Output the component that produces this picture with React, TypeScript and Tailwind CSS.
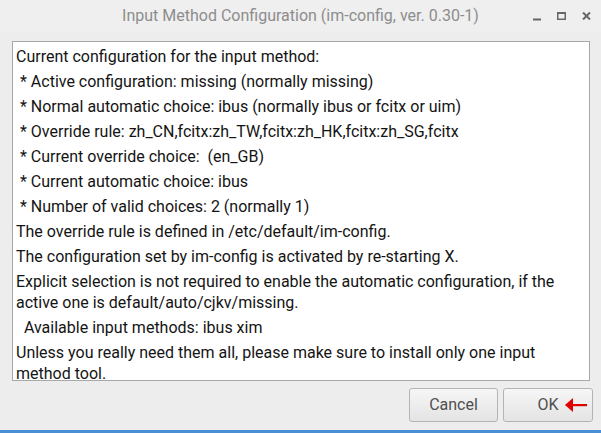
const lines: { text: string; wrap?: boolean }[] = [
  { text: "Current configuration for the input method:" },
  { text: " * Active configuration: missing (normally missing)" },
  { text: " * Normal automatic choice: ibus (normally ibus or fcitx or uim)" },
  { text: " * Override rule: zh_CN,fcitx:zh_TW,fcitx:zh_HK,fcitx:zh_SG,fcitx" },
  { text: " * Current override choice:  (en_GB)" },
  { text: " * Current automatic choice: ibus" },
  { text: " * Number of valid choices: 2 (normally 1)" },
  { text: "The override rule is defined in /etc/default/im-config." },
  { text: "The configuration set by im-config is activated by re-starting X." },
  {
    text: "Explicit selection is not required to enable the automatic configuration, if the active one is default/auto/cjkv/missing.",
  },
  { text: "  Available input methods: ibus xim" },
  {
    text: "Unless you really need them all, please make sure to install only one input method tool.",
  },
];

export default function App() {
  return (
    <div
      className="flex h-[433px] w-[601px] flex-col overflow-hidden border-b-[3px] border-b-[#4a8fd6] bg-[#ededed]"
      style={{ fontFamily: "Roboto, 'Liberation Sans', sans-serif" }}
    >
      {/* title bar */}
      <div className="relative flex h-[32px] shrink-0 items-center justify-center bg-[#efefef]">
        <span className="text-[16px] text-[#8d8d8d]">
          Input Method Configuration (im-config, ver. 0.30-1)
        </span>
        <div className="absolute right-[10px] top-[12px] flex items-start gap-[16px]">
          <svg width="8" height="8" viewBox="0 0 8 8" className="mt-[1px]">
            <rect x="0" y="5.5" width="8" height="2" fill="#666" />
          </svg>
          <svg width="9" height="8" viewBox="0 0 9 8">
            <rect x="0.75" y="0.75" width="7.5" height="6.5" fill="none" stroke="#666" strokeWidth="1.5" />
            <rect x="0" y="0" width="9" height="2" fill="#666" />
          </svg>
          <svg width="9" height="8" viewBox="0 0 9 8">
            <path d="M1 0.5 L8 7.5 M8 0.5 L1 7.5" stroke="#666" strokeWidth="2" />
          </svg>
        </div>
      </div>

      {/* body */}
      <div className="flex flex-1 flex-col px-[12px] pt-[9px] pb-[7px]">
        <div className="mr-[-1px] h-[340px] border border-[#a8a8a8] bg-white pl-[3px] pr-[6px] pt-[4px]">
          <div className="flex flex-col gap-[4px]">
            {lines.map((line, i) => (
              <p key={i} className="whitespace-pre-wrap text-[16px] leading-[21px] text-[#141414]">
                {line.text}
              </p>
            ))}
          </div>
        </div>

        <div className="mt-[7px] mr-[-4px] flex justify-end gap-[5px]">
          <button
            type="button"
            className="h-[34px] w-[89px] rounded-[3px] border border-[#b4b4b4] bg-gradient-to-b from-[#f6f6f6] to-[#e4e4e4] text-[16px] text-[#4f4f4f]"
          >
            Cancel
          </button>
          <button
            type="button"
            className="relative h-[34px] w-[90px] rounded-[3px] border border-[#b4b4b4] bg-gradient-to-b from-[#f6f6f6] to-[#e4e4e4] text-[16px] text-[#4f4f4f]"
          >
            OK
            <svg
              width="22"
              height="14"
              viewBox="0 0 22 14"
              className="absolute right-[5px] top-[9px]"
            >
              <path d="M0 7 L8 0 L8 14 Z" fill="#e00000" />
              <rect x="7" y="6" width="15" height="2.2" fill="#e00000" />
            </svg>
          </button>
        </div>
      </div>
    </div>
  );
}
